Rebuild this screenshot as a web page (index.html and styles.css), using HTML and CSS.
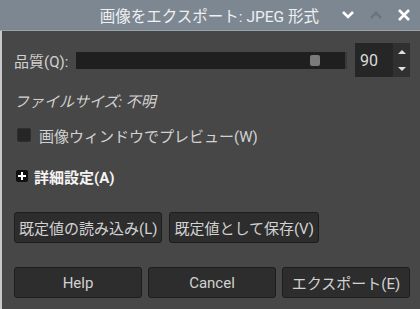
FILE: index.html
```html
<!DOCTYPE html>
<html lang="ja">
<head>
    <meta charset="UTF-8">
    <title>画像をエクスポート: JPEG 形式</title>
    <link rel="stylesheet" href="styles.css">
</head>
<body>
    <div class="window">
        <div class="titlebar">
            <span class="title">画像をエクスポート: JPEG 形式</span>
            <span class="tb-btn">
                <svg width="14" height="10" viewBox="0 0 14 10"><path d="M2 2 L7 7 L12 2" fill="none" stroke="#fff" stroke-width="2.6"/></svg>
            </span>
            <span class="tb-btn dim">
                <svg width="14" height="10" viewBox="0 0 14 10"><path d="M2 8 L7 3 L12 8" fill="none" stroke="#6a727a" stroke-width="2.4"/></svg>
            </span>
            <span class="tb-btn">
                <svg width="14" height="14" viewBox="0 0 14 14"><path d="M2 2 L12 12 M12 2 L2 12" fill="none" stroke="#fff" stroke-width="2.6"/></svg>
            </span>
        </div>

        <div class="content">
            <div class="row quality">
                <span class="label">品質(Q):</span>
                <div class="slider">
                    <div class="handle"></div>
                </div>
                <div class="spin">
                    <span class="spin-value">90</span>
                    <div class="spin-arrows">
                        <span class="arrow up"></span>
                        <span class="arrow down"></span>
                    </div>
                </div>
            </div>

            <div class="row filesize">ファイルサイズ: 不明</div>

            <div class="row check">
                <span class="checkbox"></span>
                <span>画像ウィンドウでプレビュー(W)</span>
            </div>

            <div class="row expander">
                <span class="plus"></span>
                <span>詳細設定(A)</span>
            </div>

            <div class="defaults">
                <button class="btn">既定値の読み込み(L)</button>
                <button class="btn">既定値として保存(V)</button>
            </div>

            <div class="actions">
                <button class="btn">Help</button>
                <button class="btn">Cancel</button>
                <button class="btn">エクスポート(E)</button>
            </div>
        </div>
    </div>
</body>
</html>
```

FILE: styles.css
```css
html, body {
    margin: 0;
    padding: 0;
    width: 420px;
    height: 309px;
    overflow: hidden;
    background: #474747;
}
body {
    font-family: Roboto, "Noto Sans CJK JP", sans-serif;
    font-size: 15px;
    color: #d2d2d2;
}
.window {
    display: flex;
    flex-direction: column;
    height: 309px;
}
.titlebar {
    height: 31px;
    background: #7d8791;
    border-bottom: 1px solid #9aa2aa;
    display: flex;
    align-items: center;
    justify-content: flex-end;
    padding-right: 2px;
    box-sizing: border-box;
}
.title {
    color: #eef0f2;
    font-size: 15.5px;
    margin-right: 15px;
}
.tb-btn {
    width: 28px;
    display: flex;
    justify-content: center;
    align-items: center;
}
.content {
    flex: 1;
    border-left: 2px solid #c9c9c9;
    padding: 0 10px 0 12px;
    display: flex;
    flex-direction: column;
}
.row {
    display: flex;
    align-items: center;
}
.quality {
    margin-top: 12px;
    height: 34px;
}
.label {
    width: 62px;
}
.slider {
    flex: 1;
    height: 17px;
    background: #1f1f1f;
    position: relative;
    margin-right: 8px;
    border-right: 2px solid #3a3a3a;
}
.handle {
    position: absolute;
    left: 234px;
    top: 3px;
    width: 10px;
    height: 11px;
    background: #7a7a7a;
    border-radius: 2px;
}
.spin {
    display: flex;
    height: 34px;
    background: #262626;
}
.spin-value {
    width: 38px;
    box-sizing: border-box;
    padding-left: 5px;
    display: flex;
    align-items: center;
    color: #dcdcdc;
    font-size: 16px;
}
.spin-arrows {
    width: 17px;
    background: #303030;
    display: flex;
    flex-direction: column;
    justify-content: space-around;
    align-items: center;
}
.arrow {
    width: 0;
    height: 0;
    border-left: 4px solid transparent;
    border-right: 4px solid transparent;
}
.arrow.up {
    border-bottom: 4px solid #e0e0e0;
}
.arrow.down {
    border-top: 4px solid #e0e0e0;
}
.filesize {
    margin-top: 11px;
    font-style: italic;
    height: 24px;
}
.check {
    margin-top: 11px;
    height: 24px;
}
.checkbox {
    width: 12px;
    height: 12px;
    background: #262626;
    border: 1px solid #2e2e2e;
    border-radius: 2px;
    margin: 0 8px 0 3px;
}
.expander {
    margin-top: 17px;
    height: 24px;
    font-weight: bold;
    color: #f4f4f4;
}
.plus {
    width: 12px;
    height: 12px;
    background: #111;
    border-radius: 2px;
    position: relative;
    margin: 0 6px 0 2px;
}
.plus::before, .plus::after {
    content: "";
    position: absolute;
    background: #fff;
}
.plus::before {
    left: 2px;
    top: 5px;
    width: 8px;
    height: 2px;
}
.plus::after {
    left: 5px;
    top: 2px;
    width: 2px;
    height: 8px;
}
.defaults {
    margin-top: 24px;
    display: flex;
    gap: 7px;
}
.actions {
    margin-top: 24px;
    display: grid;
    grid-template-columns: repeat(3, 1fr);
    gap: 6px;
}
.btn {
    font-family: Roboto, "Noto Sans CJK JP", sans-serif;
    font-size: 15px;
    color: #d2d2d2;
    background: #2d2d2d;
    border: 1px solid #1d1d1d;
    border-radius: 3px;
    height: 31px;
    padding: 0 4px;
}
```
